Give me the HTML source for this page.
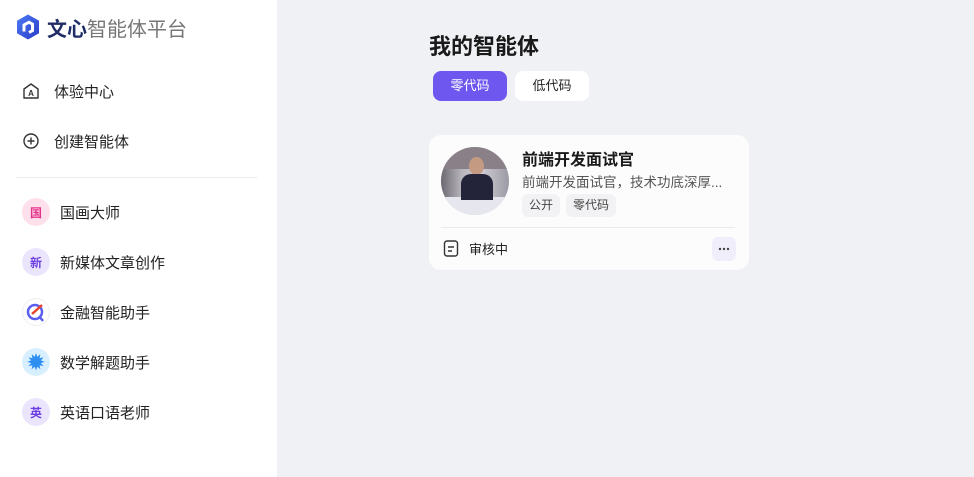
<!DOCTYPE html>
<html><head><meta charset="utf-8"><style>
*{margin:0;padding:0;box-sizing:border-box}
body{width:974px;height:477px;overflow:hidden;background:#f0f1f5;font-family:"Liberation Sans","Noto Sans CJK SC",sans-serif;position:relative;color:#1e1f24}
.side{position:absolute;left:0;top:0;width:277px;height:477px;background:#fff}
.abs{position:absolute}
.nav{position:absolute;left:22px;font-size:15px;color:#222;display:flex;align-items:center}
.nav .t{position:absolute;left:32px;white-space:nowrap}
.av{width:28px;height:28px;border-radius:50%;display:flex;align-items:center;justify-content:center;font-size:12px;font-weight:bold}
.item{position:absolute;left:22px;display:flex;align-items:center;font-size:15px;color:#222}
.item span.t{margin-left:10px}
.tag{display:inline-block;background:#f2f2f4;border-radius:6px;font-size:12px;color:#444;padding:0 7px;height:23px;line-height:23px;margin-right:6px}
</style></head><body>
<div class="side">
 <svg class="abs" style="left:16px;top:13px" width="24" height="27" viewBox="0 0 24 26"><defs><linearGradient id="g" x1="0" y1="0" x2="1" y2="1"><stop offset="0" stop-color="#4c7cf5"/><stop offset="1" stop-color="#2b3bc7"/></linearGradient></defs><path d="M12 1L23 7.3V19.7L12 26L1 19.7V7.3Z" fill="url(#g)"/><path d="M8 18V11.5L13 8.7L16.5 10.7V17L13 19" fill="none" stroke="#fff" stroke-width="3"/></svg>
 <div class="abs" style="left:47px;top:13px;font-size:20px;white-space:nowrap"><b style="color:#1f2c66">文心</b><span style="color:#777">智能体平台</span></div>
 <div class="nav" style="top:82px"><svg width="18" height="18" viewBox="0 0 18 18"><path d="M2 7L9 2L16 7V16H2Z" fill="none" stroke="#333" stroke-width="1.4" stroke-linejoin="round"/><text x="9" y="14" font-size="8" text-anchor="middle" font-weight="bold" fill="#333" font-family="Liberation Sans">A</text></svg><span class="t">体验中心</span></div>
 <div class="nav" style="top:132px"><svg width="18" height="18" viewBox="0 0 18 18"><circle cx="9" cy="9" r="7" fill="none" stroke="#333" stroke-width="1.4"/><path d="M9 5.5V12.5M5.5 9H12.5" stroke="#333" stroke-width="1.4"/></svg><span class="t">创建智能体</span></div>
 <div class="abs" style="left:16px;top:177px;width:241px;height:1px;background:#ebebee"></div>
 <div class="item" style="top:198px"><div class="av" style="background:#fde0ec;color:#e6318a">国</div><span class="t">国画大师</span></div>
 <div class="item" style="top:248px"><div class="av" style="background:#ebe4fd;color:#6b3fe0">新</div><span class="t">新媒体文章创作</span></div>
 <div class="item" style="top:298px"><div class="av" style="background:#fff;border:1px solid #eee"><svg width="22" height="22" viewBox="0 0 22 22"><circle cx="10" cy="11" r="7" fill="none" stroke="#5a5ff0" stroke-width="2.5"/><path d="M14 15L18 20" stroke="#5a5ff0" stroke-width="2.5"/><path d="M7 13L17 4" stroke="#e8452e" stroke-width="2.5"/></svg></div><span class="t">金融智能助手</span></div>
 <div class="item" style="top:348px"><div class="av" style="background:#d8efff;color:#2e8ff0;font-size:20px">✹</div><span class="t">数学解题助手</span></div>
 <div class="item" style="top:398px"><div class="av" style="background:#ebe4fd;color:#6b3fe0">英</div><span class="t">英语口语老师</span></div>
</div>
<div class="abs" style="left:429px;top:29px;font-size:22px;font-weight:bold;color:#1a1a1a">我的智能体</div>
<div class="abs" style="left:433px;top:71px;width:74px;height:30px;border-radius:8px;background:#6e57ee;color:#fff;font-size:13px;text-align:center;line-height:30px">零代码</div>
<div class="abs" style="left:515px;top:71px;width:74px;height:30px;border-radius:8px;background:#fff;color:#222;font-size:13px;text-align:center;line-height:30px">低代码</div>
<div class="abs" style="left:429px;top:135px;width:320px;height:135px;border-radius:12px;background:#fcfcfd">
 <div class="abs" style="left:12px;top:12px;width:68px;height:68px;border-radius:50%;background:linear-gradient(90deg,#6a6870,#b8b4bc 30%,#d0ccd4 60%,#9a9aa4);overflow:hidden"><div class="abs" style="left:0;top:0;width:68px;height:22px;background:#8a8088"></div><div class="abs" style="left:0;top:50px;width:68px;height:18px;background:#e6e6ee"></div><div class="abs" style="left:28px;top:10px;width:15px;height:18px;border-radius:50%;background:#c49a82"></div><div class="abs" style="left:20px;top:27px;width:32px;height:26px;border-radius:10px 10px 0 0;background:#23243a"></div></div>
 <div class="abs" style="left:93px;top:11px;font-size:16px;font-weight:bold;color:#1a1a1a">前端开发面试官</div>
 <div class="abs" style="left:93px;top:36px;font-size:13.5px;color:#555;white-space:nowrap">前端开发面试官，技术功底深厚...</div>
 <div class="abs" style="left:93px;top:59px"><span class="tag">公开</span><span class="tag">零代码</span></div>
 <div class="abs" style="left:12px;top:92px;width:294px;height:1px;background:#ebebee"></div>
 <svg class="abs" style="left:14px;top:105px" width="16" height="17" viewBox="0 0 16 17"><rect x="1.5" y="1" width="13" height="15" rx="2.5" fill="none" stroke="#333" stroke-width="1.4"/><path d="M5 7H11M5 11H9" stroke="#333" stroke-width="1.4"/></svg>
 <div class="abs" style="left:40px;top:104px;font-size:13px;color:#222">审核中</div>
 <div class="abs" style="left:283px;top:102px;width:24px;height:24px;border-radius:6px;background:#f1eefc"><svg width="24" height="24"><circle cx="8" cy="12" r="1.2" fill="#444"/><circle cx="12" cy="12" r="1.2" fill="#444"/><circle cx="16" cy="12" r="1.2" fill="#444"/></svg></div>
</div>
</body></html>
